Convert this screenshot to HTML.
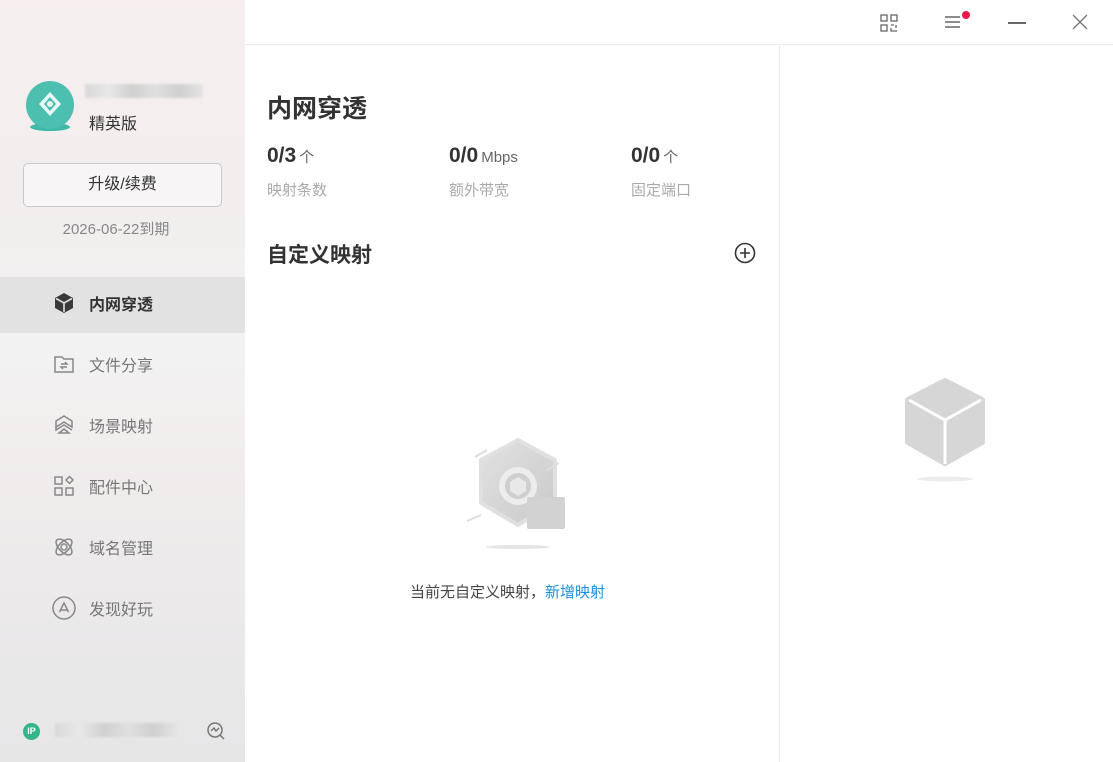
<!DOCTYPE html>
<html><head><meta charset="utf-8"><style>
*{margin:0;padding:0;box-sizing:border-box}
body{width:1113px;height:762px;overflow:hidden;background:#fff;font-family:"Liberation Sans","Noto Sans CJK SC",sans-serif;position:relative;color:#333}
.side{position:absolute;left:0;top:0;width:245px;height:762px;background:linear-gradient(180deg,#f7efef 0%,#f1eeee 30%,#f3f2f2 45%,#f1eded 60%,#ebe9ea 80%,#e6e6e7 100%)}
.abs{position:absolute}
.nav{position:absolute;left:0;width:245px;height:56px;display:flex;align-items:center;padding-left:52px;font-size:16px;color:#777;padding-bottom:4px}
.nav svg{margin-right:13px}
.nav.act{background:#e2e2e2;color:#333;font-weight:bold}
.blur{background:linear-gradient(90deg,#d8d8d8,#e8e8e8,#d0d0d0,#e0e0e0,#cfcfcf,#e5e5e5);filter:blur(1px)}
</style></head><body>
<div class="side">
  <svg class="abs" style="left:24px;top:80px" width="52" height="52" viewBox="0 0 52 52">
    <ellipse cx="26" cy="47" rx="20" ry="4" fill="#3fb8a8"/>
    <circle cx="26" cy="25" r="24" fill="#4cbfb0"/>
    <path d="M26 12 L37 24 L26 36 L15 24Z" fill="#e8f7f4"/>
    <path d="M26 17 L32 24 L26 31 L20 24Z" fill="#4cbfb0"/>
    <circle cx="26" cy="24" r="3" fill="#e8f7f4"/>
  </svg>
  <div class="abs blur" style="left:85px;top:84px;width:118px;height:14px"></div>
  <div class="abs" style="left:89px;top:110px;font-size:16px;color:#333">精英版</div>
  <div class="abs" style="left:23px;top:163px;width:199px;height:44px;border:1px solid #c9c9c9;border-radius:5px;background:#f7f5f5;text-align:center;line-height:42px;font-size:16px;color:#333">升级/续费</div>
  <div class="abs" style="left:0;width:232px;top:218px;text-align:center;font-size:15px;color:#888">2026-06-22到期</div>

  <div class="nav act" style="top:277px"><svg width="24" height="24" viewBox="0 0 24 24"><path d="M12 2 L21 7 V17 L12 22 L3 17 V7Z" fill="#3a3a3a"/><path d="M4 7.5 L12 12 L20 7.5 M12 12 V21" stroke="#e2e2e2" stroke-width="1.6" fill="none"/></svg>内网穿透</div>
  <div class="nav" style="top:338px"><svg width="24" height="24" viewBox="0 0 24 24" fill="none" stroke="#888" stroke-width="1.5"><path d="M3 5 H10 L12 7 H21 V20 H3Z"/><path d="M9 12 H15 L13 10 M15 15 H9 L11 17"/></svg>文件分享</div>
  <div class="nav" style="top:399px"><svg width="24" height="24" viewBox="0 0 24 24" fill="none" stroke="#888" stroke-width="1.5"><path d="M12 3 L20 8 V14 L12 9 L4 14 V8Z"/><path d="M4 14 V17 L12 12 L20 17 M7 20 L12 16 L17 20Z"/></svg>场景映射</div>
  <div class="nav" style="top:460px"><svg width="24" height="24" viewBox="0 0 24 24" fill="none" stroke="#888" stroke-width="1.5"><rect x="3" y="3" width="7" height="7"/><rect x="3" y="14" width="7" height="7"/><rect x="14" y="14" width="7" height="7"/><path d="M17.5 2.5 L21 6 L17.5 9.5 L14 6Z"/></svg>配件中心</div>
  <div class="nav" style="top:521px"><svg width="24" height="24" viewBox="0 0 24 24" fill="none" stroke="#888" stroke-width="1.5"><ellipse cx="12" cy="12" rx="10" ry="5" transform="rotate(45 12 12)"/><ellipse cx="12" cy="12" rx="10" ry="5" transform="rotate(-45 12 12)"/><circle cx="12" cy="12" r="3"/></svg>域名管理</div>
  <div class="nav" style="top:582px"><svg width="24" height="24" viewBox="0 0 24 24" fill="none" stroke="#888" stroke-width="1.5"><circle cx="12" cy="12" r="11"/><path d="M7.5 16 L12 7 L16.5 16 M9 14 H15"/></svg>发现好玩</div>

  <div class="abs" style="left:23px;top:723px;width:17px;height:17px;border-radius:50%;background:#35b68a;color:#fff;font-size:9px;font-weight:bold;text-align:center;line-height:17px">IP</div>
  <div class="abs blur" style="left:55px;top:723px;width:123px;height:14px"></div>
  <svg class="abs" style="left:206px;top:721px" width="20" height="20" viewBox="0 0 20 20" fill="none" stroke="#777" stroke-width="1.5"><circle cx="9" cy="9" r="7"/><path d="M5 10 L8 7 L10 10 L13 7 M14 14 L18 18"/></svg>
</div>

<div class="abs" style="left:245px;top:44px;width:868px;height:1px;background:#ececec"></div>
<div class="abs" style="left:779px;top:45px;width:1px;height:717px;background:#ececec"></div>

<svg class="abs" style="left:880px;top:14px" width="18" height="18" viewBox="0 0 18 18" fill="none" stroke="#666" stroke-width="1.3"><rect x="1" y="1" width="6" height="6"/><rect x="11" y="1" width="6" height="6"/><rect x="1" y="11" width="6" height="6"/><path d="M11 11 H14 M16 11 V14 M11 14 V17 H17"/></svg>
<svg class="abs" style="left:944px;top:10px" width="30" height="22" viewBox="0 0 30 22" stroke="#666" stroke-width="1.4"><path d="M1 7 H16 M1 12 H16 M1 17 H16"/><circle cx="22" cy="5" r="4" fill="#e8194a" stroke="none"/></svg>
<div class="abs" style="left:1008px;top:22px;width:18px;height:1.5px;background:#666"></div>
<svg class="abs" style="left:1072px;top:14px" width="16" height="16" viewBox="0 0 16 16" stroke="#777" stroke-width="1.4"><path d="M1 1 L15 15 M15 1 L1 15"/></svg>

<div class="abs" style="left:267px;top:89px;font-size:25px;font-weight:bold;color:#333">内网穿透</div>
<div class="abs" style="left:267px;top:144px;font-size:21px;font-weight:bold;color:#333">0/3<span style="font-size:15px;font-weight:normal;color:#666;margin-left:3px">个</span></div>
<div class="abs" style="left:267px;top:179px;font-size:15px;color:#aaa">映射条数</div>
<div class="abs" style="left:449px;top:144px;font-size:21px;font-weight:bold;color:#333">0/0<span style="font-size:15px;font-weight:normal;color:#666;margin-left:3px">Mbps</span></div>
<div class="abs" style="left:449px;top:179px;font-size:15px;color:#aaa">额外带宽</div>
<div class="abs" style="left:631px;top:144px;font-size:21px;font-weight:bold;color:#333">0/0<span style="font-size:15px;font-weight:normal;color:#666;margin-left:3px">个</span></div>
<div class="abs" style="left:631px;top:179px;font-size:15px;color:#aaa">固定端口</div>
<div class="abs" style="left:267px;top:239px;font-size:21px;font-weight:bold;color:#333">自定义映射</div>
<svg class="abs" style="left:734px;top:242px" width="22" height="22" viewBox="0 0 22 22" fill="none" stroke="#333" stroke-width="1.6"><circle cx="11" cy="11" r="9.5"/><path d="M11 6 V16 M6 11 H16"/></svg>

<svg class="abs" style="left:455px;top:435px" width="135" height="120" viewBox="0 0 135 120">
  <defs><linearGradient id="g" x1="0" y1="0" x2="1" y2="1"><stop offset="0" stop-color="#e2e2e2"/><stop offset="1" stop-color="#c9c9c9"/></linearGradient></defs>
  <path d="M63 5 L100 25 V68 L63 90 L26 68 V25Z" fill="url(#g)" stroke="#e0e0e0" stroke-width="4" stroke-linejoin="round"/>
  <circle cx="63" cy="51" r="19" fill="#ededed"/><circle cx="63" cy="51" r="13" fill="#cfcfcf"/>
  <path d="M63 42 L71 47 V56 L63 61 L55 56 V47Z" fill="#e8e8e8"/>
  <rect x="72" y="62" width="38" height="32" rx="2" fill="#d2d2d2"/>
  <path d="M20 22 L32 15 M92 35 L104 28 M12 86 L26 80" stroke="#ddd" stroke-width="2"/>
  <ellipse cx="63" cy="112" rx="32" ry="2" fill="#e4e4e4"/>
</svg>
<div class="abs" style="left:410px;top:581px;font-size:15px;color:#444">当前无自定义映射，<span style="color:#1a8fe0">新增映射</span></div>

<svg class="abs" style="left:903px;top:378px" width="84" height="106" viewBox="0 0 84 106">
  <path d="M42 3 L79 22 V64 L42 85 L5 64 V22Z" fill="#d6d6d6" stroke="#d6d6d6" stroke-width="6" stroke-linejoin="round"/>
  <path d="M6 22 L42 42 L78 22 M42 42 V86" stroke="#fff" stroke-width="3" fill="none"/>
  <ellipse cx="42" cy="101" rx="28" ry="2.5" fill="#ececec"/>
</svg>
</body></html>
